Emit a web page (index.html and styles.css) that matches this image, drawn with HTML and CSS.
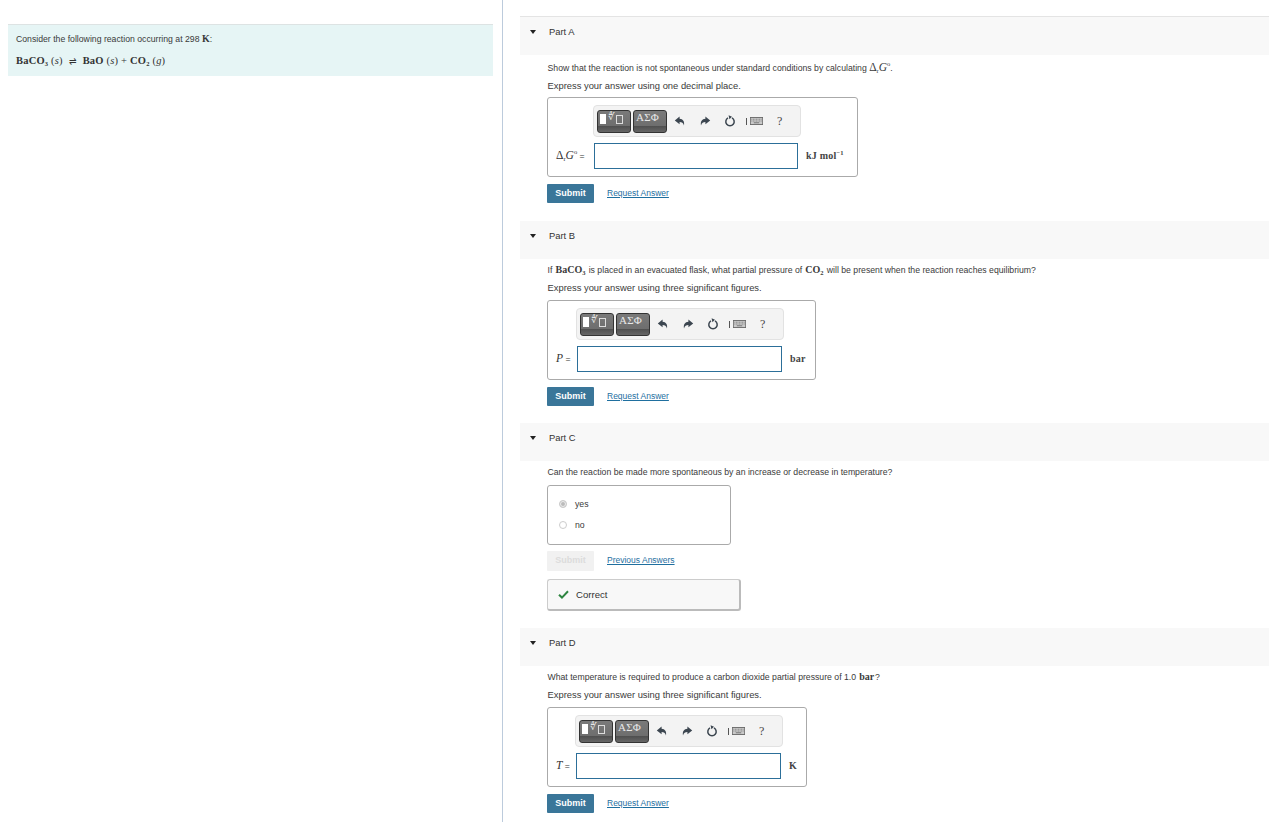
FILE: index.html
```html
<!DOCTYPE html>
<html lang="en">
<head>
<meta charset="utf-8">
<title>Reaction spontaneity</title>
<link rel="stylesheet" href="styles.css">
</head>
<body>
<svg class="defs" width="0" height="0" aria-hidden="true">
  <symbol id="i-undo" viewBox="0 0 12 12"><path d="M5.6 1.6 0.8 5.4l4.8 3.8V6.9c2.2 0 3.6.9 4.4 3.5.7-3.8-1-6.5-4.4-6.6z" fill="#3c4650"/></symbol>
  <symbol id="i-redo" viewBox="0 0 12 12"><path d="M6.4 1.6l4.8 3.8-4.8 3.8V6.9c-2.2 0-3.6.9-4.4 3.5-.7-3.8 1-6.5 4.4-6.6z" fill="#3c4650"/></symbol>
  <symbol id="i-reset" viewBox="0 0 12 12"><path d="M4 2.9a4.2 4.2 0 1 0 4 0" fill="none" stroke="#3c4650" stroke-width="1.5"/><path d="M4.6 0.2 8 1.7 5.4 4.2z" fill="#3c4650"/></symbol>
  <symbol id="i-kbd" viewBox="0 0 17 9" preserveAspectRatio="none"><rect x=".5" y=".5" width="16" height="8" fill="#c9c9c9" stroke="#666"/><path d="M2 2.5h13M2 4.5h13" stroke="#666" stroke-dasharray="1 1"/><path d="M5 6.5h7" stroke="#666"/></symbol>
</svg>
<div class="page">
  <aside class="intro">
    <div class="intro-card">
      <p class="intro-text">Consider the following reaction occurring at 298 <span class="math bold-k">K</span>:</p>
      <p class="equation"><span class="bold">BaCO<sub>3</sub></span> (<i>s</i>) <span class="eq-arrow">⇌</span> <span class="bold">BaO</span> (<i>s</i>) + <span class="bold">CO<sub>2</sub></span> (<i>g</i>)</p>
    </div>
  </aside>
  <main class="parts">
    <section class="part part-first">
      <header class="part-head"><span class="tri"></span><span>Part A</span></header>
      <div class="part-body">
        <p class="prompt prompt-first">Show that the reaction is not spontaneous under standard conditions by calculating <span class="math delta">Δ<sub>r</sub><i>G</i><sup>o</sup></span>.</p>
        <p class="prompt instr">Express your answer using one decimal place.</p>
        <div class="answer answer-a">
          <div class="toolbar">
            <span class="tool-btn"><span class="cursor"></span><span class="tool-sym">∜</span><span class="tool-box"></span></span>
            <span class="tool-btn"><span class="tool-greek">ΑΣΦ</span></span>
            <svg class="ic first"><use href="#i-undo"/></svg>
            <svg class="ic"><use href="#i-redo"/></svg>
            <svg class="ic"><use href="#i-reset"/></svg>
            <span class="sep"></span>
            <svg class="kbd"><use href="#i-kbd"/></svg>
            <span class="help">?</span>
          </div>
          <label class="lbl"><span class="math delta">Δ<sub>r</sub><i>G</i><sup>o</sup></span> =</label>
          <input class="field" type="text" aria-label="answer">
          <span class="unit">kJ mol<sup>−1</sup></span>
        </div>
        <div class="actions"><button class="submit">Submit</button><a class="link" href="#">Request Answer</a></div>
      </div>
    </section>

    <section class="part">
      <header class="part-head"><span class="tri"></span><span>Part B</span></header>
      <div class="part-body">
        <p class="prompt">If <span class="math bold">BaCO<sub>3</sub></span> is placed in an evacuated flask, what partial pressure of <span class="math bold">CO<sub>2</sub></span> will be present when the reaction reaches equilibrium?</p>
        <p class="prompt instr">Express your answer using three significant figures.</p>
        <div class="answer answer-b">
          <div class="toolbar">
            <span class="tool-btn"><span class="cursor"></span><span class="tool-sym">∜</span><span class="tool-box"></span></span>
            <span class="tool-btn"><span class="tool-greek">ΑΣΦ</span></span>
            <svg class="ic first"><use href="#i-undo"/></svg>
            <svg class="ic"><use href="#i-redo"/></svg>
            <svg class="ic"><use href="#i-reset"/></svg>
            <span class="sep"></span>
            <svg class="kbd"><use href="#i-kbd"/></svg>
            <span class="help">?</span>
          </div>
          <label class="lbl"><i class="math delta">P</i> =</label>
          <input class="field" type="text" aria-label="answer">
          <span class="unit">bar</span>
        </div>
        <div class="actions"><button class="submit">Submit</button><a class="link" href="#">Request Answer</a></div>
      </div>
    </section>

    <section class="part">
      <header class="part-head"><span class="tri"></span><span>Part C</span></header>
      <div class="part-body">
        <p class="prompt">Can the reaction be made more spontaneous by an increase or decrease in temperature?</p>
        <div class="choices">
          <div class="choice"><span class="radio radio-on"></span><span>yes</span></div>
          <div class="choice"><span class="radio"></span><span>no</span></div>
        </div>
        <div class="actions actions-c"><button class="submit submit-off" disabled>Submit</button><a class="link" href="#">Previous Answers</a></div>
        <div class="correct">
          <svg class="check" viewBox="0 0 12 10" width="11" height="9"><path d="M1 5.2 4.3 8.4 11 1.4" fill="none" stroke="#2e8540" stroke-width="2.2"/></svg>
          <span>Correct</span>
        </div>
      </div>
    </section>

    <section class="part">
      <header class="part-head"><span class="tri"></span><span>Part D</span></header>
      <div class="part-body">
        <p class="prompt">What temperature is required to produce a carbon dioxide partial pressure of 1.0 <span class="math bold">bar</span>?</p>
        <p class="prompt instr">Express your answer using three significant figures.</p>
        <div class="answer answer-d">
          <div class="toolbar">
            <span class="tool-btn"><span class="cursor"></span><span class="tool-sym">∜</span><span class="tool-box"></span></span>
            <span class="tool-btn"><span class="tool-greek">ΑΣΦ</span></span>
            <svg class="ic first"><use href="#i-undo"/></svg>
            <svg class="ic"><use href="#i-redo"/></svg>
            <svg class="ic"><use href="#i-reset"/></svg>
            <span class="sep"></span>
            <svg class="kbd"><use href="#i-kbd"/></svg>
            <span class="help">?</span>
          </div>
          <label class="lbl"><i class="math delta">T</i> =</label>
          <input class="field" type="text" aria-label="answer">
          <span class="unit">K</span>
        </div>
        <div class="actions"><button class="submit">Submit</button><a class="link" href="#">Request Answer</a></div>
      </div>
    </section>
  </main>
</div>
</body>
</html>
```
FILE: styles.css
```css
* { box-sizing: border-box; }
html, body { margin: 0; padding: 0; background: #fff; }
body { font-family: "Liberation Sans", Arial, sans-serif; font-size: 8.7px; color: #3a3a3a; height: 822px; overflow: hidden; }
.defs { display: block; height: 0; }
p { margin: 0; }
sub, sup { font-size: 6.5px; line-height: 0; }
sub { vertical-align: -1.5px; }

.page { display: flex; height: 822px; }
.intro { width: 503px; flex: none; padding: 24px 9px 0 8px; border-right: 1px solid #bccbdc; }
.intro-card { background: #e6f5f5; border-top: 1px solid #dde3e3; height: 52px; padding: 8px 8px 0; }
.intro-text { line-height: 13px; }
.equation { margin-top: 8px; font-family: "Liberation Serif", serif; font-size: 10.5px; line-height: 14px; letter-spacing: .2px; color: #333; }
.eq-arrow { margin: 0 3px; font-size: 9px; }
.math { font-family: "Liberation Serif", serif; font-size: 10px; line-height: 0; }
.bold-k { font-weight: bold; }
.math.bold { font-weight: bold; margin: 0 .8px; }
.math.delta { font-size: 11.5px; }
.bold { font-weight: bold; }

.parts { flex: 1; min-width: 0; padding: 16px 0 0 17px; }
.part { margin-bottom: 17px; }
.part-first { border-top: 1px solid #e4e4e4; margin-bottom: 18px; }
.part-head { display: flex; align-items: center; height: 38px; background: #f8f8f8; padding: 0 0 9px 10px; font-size: 9.4px; color: #333; }
.tri { width: 0; height: 0; border-left: 3.5px solid transparent; border-right: 3.5px solid transparent; border-top: 4px solid #222; margin-right: 13px; }
.part-body { padding-left: 27px; }
.prompt { line-height: 17px; margin-bottom: 0; padding-left: .5px; }
.instr { font-size: 9.4px; }
.part-body > .prompt:first-child { margin-top: 3px; }
.part-body > .prompt-first:first-child { margin-top: 5px; }

.answer { display: inline-grid; column-gap: 4px; align-items: center; vertical-align: top; margin-top: 4px; border: 1px solid #aaa; border-radius: 3px; padding: 7px 10px 7px 8px; height: 80px; background: #fff; }
.answer-a { margin-top: 3px; grid-template-columns: 34px 204px 45px; }
.answer-b { grid-template-columns: 17px 205px 19px; }
.answer-d { grid-template-columns: 16px 205px 11px; }
.toolbar { grid-column: 2; display: flex; align-items: center; width: 208px; height: 32px; margin-left: -1px; padding-left: 3px; background: #f3f3f3; border: 1px solid #e2e2e2; border-radius: 4px; }
.tool-btn { display: flex; align-items: flex-start; gap: 2px; flex: none; width: 34px; height: 23px; margin-right: 2px; padding: 1px 0 0 2px; background: linear-gradient(#7a7a7a 0, #6e6e6e 70%, #4f4f4f 72%, #666 100%); border: 1px solid #333; border-radius: 3px; color: #e8e8e8; }
.cursor { width: 6px; height: 10px; background: #fff; margin-top: 2px; }
.tool-sym { font-family: "Liberation Serif", serif; font-size: 10px; line-height: 10px; }
.tool-box { width: 7px; height: 9px; border: 1px solid #ddd; margin-top: 3px; }
.tool-greek { font-family: "Liberation Serif", serif; font-size: 11px; line-height: 11px; letter-spacing: .2px; }
.ic { width: 12px; height: 12px; flex: none; margin-right: 13px; }
.ic.first { margin-left: 5px; }
.ic:nth-of-type(3) { margin-right: 10px; }
.sep { width: 1px; height: 7px; background: #555; margin-right: 3px; }
.kbd { width: 13px; height: 8px; flex: none; }
.help { margin-left: 14px; font-family: "Liberation Serif", serif; font-size: 12px; color: #444; }
.lbl { grid-row: 2; grid-column: 1; white-space: nowrap; color: #333; }
.field { grid-row: 2; grid-column: 2; width: 100%; height: 26px; margin-top: 6px; border: 1px solid #2c6f99; background: #fff; padding: 0; outline: none; }
.lbl, .unit { margin-top: 5px; }
.unit { grid-row: 2; grid-column: 3; margin-left: 4px; font-family: "Liberation Serif", serif; font-weight: bold; font-size: 10px; letter-spacing: .2px; color: #444; white-space: nowrap; }

.actions { display: flex; align-items: center; margin-top: 7px; }
.submit { width: 47px; height: 19px; padding: 0 0 2px; border: 0; border-radius: 1px; background: #3a7699; color: #fff; font: bold 9px "Liberation Sans", Arial, sans-serif; }
.submit-off { background: #f1f1f1; color: #dcdcdc; height: 20px; }
.link { margin: 0 0 2px 13px; font-size: 8.5px; color: #1f6f9f; text-decoration: underline; }
.actions-c { margin-top: 6px; }

.choices { width: 184px; height: 60px; margin-top: 4px; padding-top: 7px; border: 1px solid #aaa; border-radius: 3px; }
.choice { display: flex; align-items: center; height: 21px; padding-left: 11px; }
.radio { width: 8px; height: 8px; margin-right: 8px; border: 1px solid #ccc; border-radius: 50%; background: #fff; }
.radio-on { background: #bbb; box-shadow: inset 0 0 0 1px #eee; }
.correct { display: flex; align-items: center; width: 194px; height: 32px; margin-top: 8px; padding: 0 0 1px 10px; font-size: 9.6px; background: #f8f8f8; border: 1px solid #ccc; border-right: 2px solid #bbb; border-bottom: 2px solid #bbb; border-radius: 3px; color: #333; }
.check { margin-right: 7px; }
```
